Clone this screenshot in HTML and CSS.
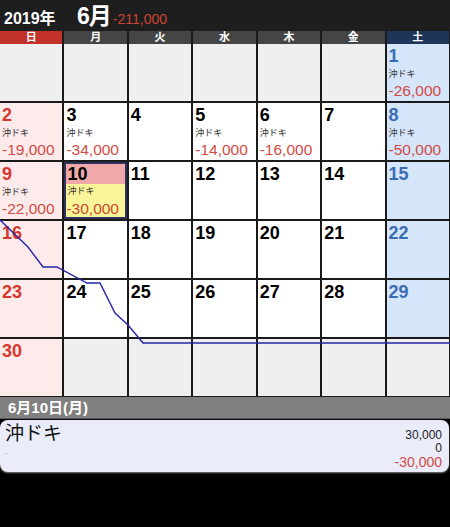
FILE: index.html
```html
<!DOCTYPE html>
<html lang="ja">
<head>
<meta charset="utf-8">
<link rel="stylesheet" href="styles.css">
</head>
<body>
<div class="app">
  <div class="topbar">
    <span class="year">2019年</span>
    <span class="month">6月</span>
    <span class="total">-211,000</span>
  </div>
  <div class="weekdays">
    <div class="wd sun">日</div>
    <div class="wd">月</div>
    <div class="wd">火</div>
    <div class="wd">水</div>
    <div class="wd">木</div>
    <div class="wd">金</div>
    <div class="wd sat">土</div>
  </div>
  <div class="calwrap">
    <div class="grid">
      <div class="cell out"></div>
      <div class="cell out"></div>
      <div class="cell out"></div>
      <div class="cell out"></div>
      <div class="cell out"></div>
      <div class="cell out"></div>
      <div class="cell satc"><div class="num">1</div><div class="game">沖ドキ</div><div class="amt">-26,000</div></div>

      <div class="cell sunc"><div class="num">2</div><div class="game">沖ドキ</div><div class="amt">-19,000</div></div>
      <div class="cell"><div class="num">3</div><div class="game">沖ドキ</div><div class="amt">-34,000</div></div>
      <div class="cell"><div class="num">4</div></div>
      <div class="cell"><div class="num">5</div><div class="game">沖ドキ</div><div class="amt">-14,000</div></div>
      <div class="cell"><div class="num">6</div><div class="game">沖ドキ</div><div class="amt">-16,000</div></div>
      <div class="cell"><div class="num">7</div></div>
      <div class="cell satc"><div class="num">8</div><div class="game">沖ドキ</div><div class="amt">-50,000</div></div>

      <div class="cell sunc"><div class="num">9</div><div class="game">沖ドキ</div><div class="amt">-22,000</div></div>
      <div class="cell today"><div class="num">10</div><div class="game">沖ドキ</div><div class="amt">-30,000</div></div>
      <div class="cell"><div class="num">11</div></div>
      <div class="cell"><div class="num">12</div></div>
      <div class="cell"><div class="num">13</div></div>
      <div class="cell"><div class="num">14</div></div>
      <div class="cell satc"><div class="num">15</div></div>

      <div class="cell sunc"><div class="num">16</div></div>
      <div class="cell"><div class="num">17</div></div>
      <div class="cell"><div class="num">18</div></div>
      <div class="cell"><div class="num">19</div></div>
      <div class="cell"><div class="num">20</div></div>
      <div class="cell"><div class="num">21</div></div>
      <div class="cell satc"><div class="num">22</div></div>

      <div class="cell sunc"><div class="num">23</div></div>
      <div class="cell"><div class="num">24</div></div>
      <div class="cell"><div class="num">25</div></div>
      <div class="cell"><div class="num">26</div></div>
      <div class="cell"><div class="num">27</div></div>
      <div class="cell"><div class="num">28</div></div>
      <div class="cell satc"><div class="num">29</div></div>

      <div class="cell sunc"><div class="num">30</div></div>
      <div class="cell out"></div>
      <div class="cell out"></div>
      <div class="cell out"></div>
      <div class="cell out"></div>
      <div class="cell out"></div>
      <div class="cell out"></div>
    </div>
    <svg class="chart" width="450" height="354" viewBox="0 0 450 354">
      <polyline points="0,176 28,203 43,223 57,223 87,239 100,239 115,269 128,281 143,299 450,299" fill="none" stroke="#2424a8" stroke-width="1.4"/>
    </svg>
  </div>
  <div class="dayhead">6月10日(月)</div>
  <div class="card">
    <div class="cardleft">
      <div class="cgame">沖ドキ</div>
      <div class="cnote">.</div>
    </div>
    <div class="cardright">
      <div class="cv">30,000</div>
      <div class="cv">0</div>
      <div class="cv neg">-30,000</div>
    </div>
  </div>
</div>
</body>
</html>
```

FILE: styles.css
```css
* { box-sizing: border-box; }
html, body {
  margin: 0;
  padding: 0;
  background: #000;
}
body {
  font-family: "Liberation Sans", "Noto Sans CJK JP", sans-serif;
  width: 450px;
  height: 527px;
  overflow: hidden;
}
.app {
  width: 450px;
  height: 527px;
  background: #000;
}
.topbar {
  height: 31px;
  background: #1e1e1e;
  display: flex;
  align-items: flex-end;
  padding: 0 0 3px 4px;
  color: #fff;
}
.year {
  font-size: 16px;
  font-weight: bold;
  line-height: 18px;
  width: 73px;
}
.month {
  font-size: 23px;
  font-weight: bold;
  line-height: 24px;
  letter-spacing: -1px;
}
.total {
  color: #cc4433;
  font-size: 14px;
  line-height: 17px;
  margin-left: 2px;
}
.weekdays {
  display: grid;
  grid-template-columns: repeat(7, 1fr);
  column-gap: 2px;
  background: #1a1a1a;
  height: 13px;
  padding-right: 1px;
}
.wd {
  background: #454545;
  color: #fff;
  font-size: 11px;
  line-height: 13px;
  text-align: center;
  font-weight: bold;
}
.wd.sun { background: #c0322a; }
.wd.sat { background: #1d3558; }
.calwrap {
  position: relative;
  height: 353px;
}
.grid {
  display: grid;
  grid-template-columns: repeat(7, 1fr);
  grid-template-rows: repeat(6, 57px);
  gap: 2px;
  background: #1a1a1a;
  padding: 0 1px 1px 0;
  height: 353px;
}
.cell {
  background: #fff;
  display: flex;
  flex-direction: column;
  padding: 2px 0 0 2px;
  overflow: hidden;
}
.cell.out { background: #efefef; }
.cell.sunc { background: #fdeaea; }
.cell.satc { background: #d5e5fa; }
.num {
  font-size: 18px;
  font-weight: bold;
  line-height: 20px;
  color: #000;
}
.sunc .num { color: #d8372d; }
.satc .num { color: #3b6db3; }
.game {
  font-size: 9px;
  line-height: 13px;
  margin-top: 2px;
  color: #333;
}
.amt {
  font-size: 15.5px;
  line-height: 17px;
  margin-top: auto;
  margin-bottom: 2px;
  color: #d24b44;
}
.cell.today {
  background: #fbf59a;
  border: 2px solid #2c3160;
  padding: 0;
}
.today .num {
  background: #f0a8a8;
  padding-left: 1px;
  height: 20px;
}
.today .game { margin-top: 1px; padding-left: 1px; }
.today .amt { margin-bottom: 0; color: #c84a30; }
.chart {
  position: absolute;
  left: 0;
  top: 0;
  pointer-events: none;
}
.dayhead {
  height: 22px;
  background: #808080;
  color: #fff;
  font-size: 15px;
  font-weight: bold;
  line-height: 22px;
  padding-left: 8px;
  border-bottom: 1px solid #5a5a5a;
}
.card {
  margin: 1px 1px 0 0;
  height: 52px;
  background: #eaecfa;
  border-radius: 8px;
  box-shadow: 0 1px 2px rgba(255,255,255,0.5);
  display: flex;
  justify-content: space-between;
  padding: 2px 7px 0 5px;
}
.cgame {
  font-size: 19px;
  line-height: 24px;
  color: #111;
}
.cnote {
  font-size: 8px;
  line-height: 12px;
  color: #555;
}
.cardright {
  text-align: right;
  padding-top: 7px;
}
.cv {
  font-size: 12px;
  line-height: 13px;
  color: #222;
}
.cv.neg {
  font-size: 14px;
  line-height: 15px;
  color: #d24b44;
}
```
